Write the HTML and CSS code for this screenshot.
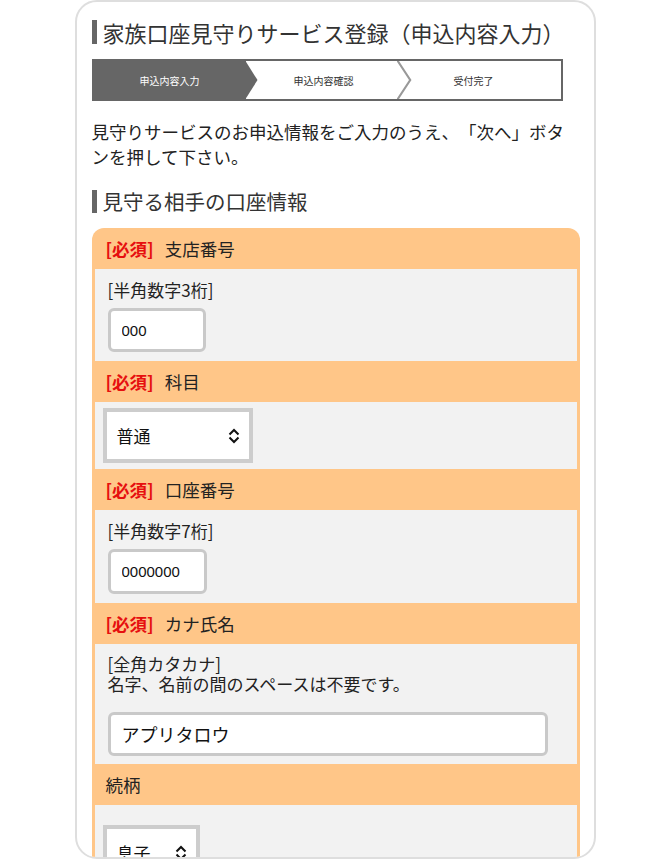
FILE: index.html
```html
<!DOCTYPE html>
<html lang="ja">
<head>
<meta charset="utf-8">
<title>家族口座見守りサービス登録</title>
<link rel="stylesheet" href="styles.css">
</head>
<body>
<div class="phone">
  <h1 class="title">家族口座見守りサービス登録（申込内容入力）</h1>
  <div class="steps">
    <div class="step step-1 active">申込内容入力</div>
    <div class="step step-2">申込内容確認</div>
    <div class="step step-3">受付完了</div>
  </div>
  <p class="lead">見守りサービスのお申込情報をご入力のうえ、「次へ」ボタンを押して下さい。</p>
  <h2 class="section-title">見守る相手の口座情報</h2>

  <div class="card">
    <div class="row-head"><span class="req">[必須]</span><span>支店番号</span></div>
    <div class="row-body">
      <div class="hint">[半角数字3桁]</div>
      <input class="field field-branch" type="text" value="000" readonly>
    </div>

    <div class="row-head"><span class="req">[必須]</span><span>科目</span></div>
    <div class="row-body row-select">
      <div class="select select-type"><span>普通</span>
        <svg class="chev" width="12" height="16" viewBox="0 0 12 16"><path d="M1.5 6.5 L6 2 L10.5 6.5 M1.5 9.5 L6 14 L10.5 9.5" fill="none" stroke="#111" stroke-width="2"/></svg>
      </div>
    </div>

    <div class="row-head"><span class="req">[必須]</span><span>口座番号</span></div>
    <div class="row-body">
      <div class="hint">[半角数字7桁]</div>
      <input class="field field-account" type="text" value="0000000" readonly>
    </div>

    <div class="row-head"><span class="req">[必須]</span><span>カナ氏名</span></div>
    <div class="row-body row-name">
      <div class="hint">[全角カタカナ]<br>名字、名前の間のスペースは不要です。</div>
      <input class="field field-name" type="text" value="アプリタロウ" readonly>
    </div>

    <div class="row-head"><span>続柄</span></div>
    <div class="row-body row-select row-relation">
      <div class="select select-relation"><span>息子</span>
        <svg class="chev" width="12" height="16" viewBox="0 0 12 16"><path d="M1.5 6.5 L6 2 L10.5 6.5 M1.5 9.5 L6 14 L10.5 9.5" fill="none" stroke="#111" stroke-width="2"/></svg>
      </div>
    </div>
  </div>
</div>
</body>
</html>
```
FILE: styles.css
```css
html, body {
  margin: 0;
  padding: 0;
  background: #fff;
}
body {
  font-family: "Noto Sans CJK JP", "Noto Sans", sans-serif;
  color: #222;
  text-spacing-trim: space-all;
}
.phone {
  box-sizing: border-box;
  width: 521px;
  height: 859px;
  margin: 0 auto;
  border: 2px solid #dedede;
  border-radius: 22px;
  overflow: hidden;
  padding: 15px 14px 0 15px;
}
.title {
  display: flex;
  align-items: center;
  margin: 0;
  font-size: 22px;
  line-height: 30px;
  font-weight: 400;
  color: #333;
  white-space: nowrap;
}
.title::before,
.section-title::before {
  content: "";
  flex: none;
  width: 5px;
  height: 24px;
  background: #666;
  margin-right: 6px;
}
.steps {
  box-sizing: border-box;
  display: flex;
  width: 471px;
  height: 42px;
  margin-top: 12px;
  border: 2px solid #666;
}
.step {
  position: relative;
  display: flex;
  align-items: center;
  justify-content: center;
  font-size: 10px;
  color: #333;
}
.step-1 {
  width: 152px;
  flex: none;
}
.step-2 {
  width: 151px;
  flex: none;
  padding-left: 5px;
  box-sizing: border-box;
}
.step-3 {
  flex: 1;
  padding-right: 10px;
}
.step.active {
  background: #666;
  color: #fff;
}
.step-1::after {
  content: "";
  position: absolute;
  top: 0;
  bottom: 0;
  right: -12px;
  width: 12px;
  background: #666;
  clip-path: polygon(0 0, 100% 50%, 0 100%);
}
.step-2::after {
  content: "";
  position: absolute;
  top: 0;
  bottom: 0;
  right: -15px;
  width: 15px;
  background: #999;
  clip-path: polygon(0 0, 2.5px 0, 100% 50%, 2.5px 100%, 0 100%, calc(100% - 2.5px) 50%);
}
.lead {
  margin: 18px 0 0;
  font-size: 17.5px;
  line-height: 25px;
  color: #222;
}
.section-title {
  display: flex;
  align-items: center;
  margin: 18px 0 0;
  font-size: 20.5px;
  line-height: 28px;
  font-weight: 400;
  color: #333;
}
.section-title::before {
  height: 23px;
}
.card {
  margin-top: 13px;
  background: #ffc688;
  border-radius: 12px 12px 0 0;
  padding: 0 3px;
}
.row-head {
  display: flex;
  align-items: center;
  gap: 11px;
  height: 41px;
  padding-left: 11px;
  font-size: 17.5px;
  color: #222;
}
.req {
  color: #e60f0f;
  font-weight: 700;
}
.row-body {
  background: #f2f2f2;
  padding: 11px 12px 9px 13px;
}
.hint {
  font-size: 17px;
  line-height: 20px;
  color: #222;
}
.field {
  display: block;
  box-sizing: border-box;
  margin: 8px 0 0;
  height: 44px;
  border: 3px solid #c9c9c9;
  border-radius: 6px;
  background: #fff;
  padding: 0 0 0 11px;
  font-family: "Liberation Sans", "Noto Sans CJK JP", sans-serif;
  font-size: 15px;
  color: #111;
  outline: none;
}
.field-branch {
  width: 98px;
}
.field-account {
  width: 99px;
  height: 45px;
}
.row-name {
  padding-top: 10px;
  padding-bottom: 8px;
}
.row-name .field {
  margin-top: 18px;
}
.field-name {
  width: 440px;
  font-family: "Noto Sans CJK JP", sans-serif;
  font-size: 18px;
}
.row-select {
  padding: 6px 8px 6px 8px;
}
.select {
  box-sizing: border-box;
  display: flex;
  align-items: center;
  justify-content: space-between;
  height: 55px;
  border: 4px solid #cdcdcd;
  background: #fff;
  padding: 0 9px 0 10px;
  font-size: 17px;
  color: #111;
}
.select-type {
  width: 150px;
}
.select-relation {
  width: 97px;
}
.row-relation {
  padding-top: 20px;
  height: 80px;
}
.chev {
  display: block;
}
```
